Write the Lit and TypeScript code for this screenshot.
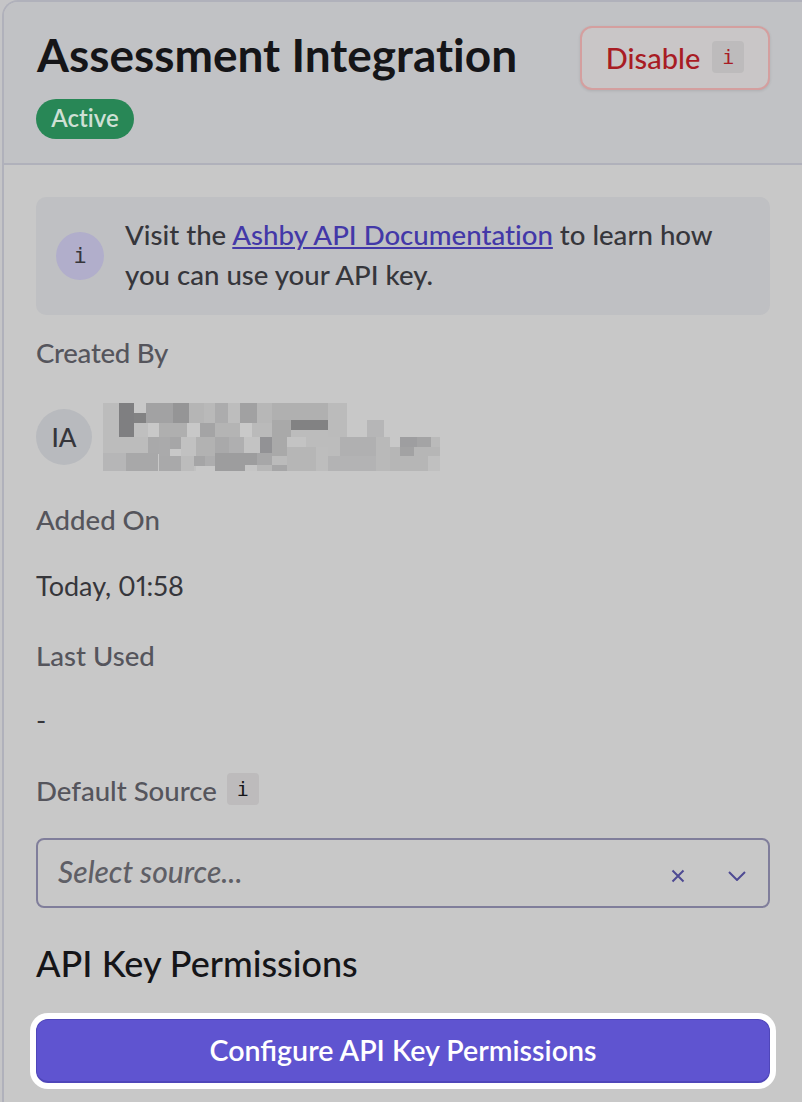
import { LitElement, css, html, svg } from 'lit';
import { customElement } from 'lit/decorators.js';

// pixelated name block: x, y, w, h, colour (relative to block origin)
const BLOCKS: [number, number, number, number, string][] = [
   [0, 0, 16, 34, '#bcbcbc'],
   [16, 0, 15, 34, '#7f7f81'],
   [31, 10, 14, 10, '#828283'],
   [31, 20, 14, 14, '#bfbfbf'],
   [43, 0, 27, 20, '#a2a2a3'],
   [70, 0, 16, 20, '#959596'],
   [86, 0, 15, 20, '#b5b5b5'],
   [101, 0, 11, 20, '#b9b9b9'],
   [112, 0, 13, 20, '#acacad'],
   [125, 0, 12, 20, '#bdbdbd'],
   [137, 0, 17, 20, '#a1a1a2'],
   [154, 0, 15, 20, '#b7b7b7'],
   [169, 0, 56, 17, '#b0b0b0'],
   [225, 0, 19, 34, '#bbbbbb'],
   [56, 20, 28, 14, '#afafaf'],
   [97, 20, 15, 14, '#a4a4a5'],
   [112, 20, 25, 14, '#b4b4b4'],
   [137, 20, 12, 14, '#c9c9c9'],
   [149, 20, 20, 14, '#bababa'],
   [169, 17, 19, 17, '#a9a9a9'],
   [188, 17, 37, 10, '#828283'],
   [188, 27, 37, 7, '#bcbcbc'],
   [264, 17, 17, 17, '#b6b6b7'],
   [0, 34, 45, 34, '#bcbcbc'],
   [45, 34, 11, 17, '#a9a9aa'],
   [56, 34, 11, 34, '#aaaaab'],
   [67, 34, 11, 12, '#a6a6a7'],
   [78, 34, 15, 34, '#c1c1c1'],
   [93, 34, 19, 19, '#b2b2b2'],
   [112, 34, 14, 19, '#a9a9aa'],
   [126, 34, 15, 19, '#afafb0'],
   [141, 34, 16, 19, '#c3c3c3'],
   [157, 34, 12, 19, '#929295'],
   [169, 34, 15, 19, '#a9a9a9'],
   [184, 34, 19, 10, '#c3c3c3'],
   [203, 34, 34, 19, '#bcbcbc'],
   [237, 34, 36, 19, '#b0b0b1'],
   [273, 34, 14, 34, '#b9b9b9'],
   [297, 34, 17, 10, '#9e9ea0'],
   [297, 44, 14, 9, '#a2a2a3'],
   [314, 34, 14, 10, '#a4a4a5'],
   [328, 34, 14, 19, '#bababa'],
   [91, 53, 11, 10, '#a5a5a6'],
   [102, 53, 11, 10, '#adadae'],
   [112, 50, 42, 18, '#9d9d9e'],
   [154, 50, 15, 12, '#a7a7a8'],
   [169, 53, 15, 15, '#bbbbbb'],
   [184, 44, 29, 24, '#b6b6b6'],
   [23, 50, 32, 18, '#a8a8a9'],
   [0, 50, 23, 18, '#b6b6b7'],
   [56, 53, 22, 15, '#a9a9aa'],
   [78, 53, 13, 15, '#bcbcbc'],
   [112, 62, 30, 6, '#9d9d9e'],
   [142, 62, 12, 6, '#c5c5c5'],
   [154, 62, 15, 6, '#b7b7b7'],
   [169, 62, 15, 6, '#a6a6a7'],
   [213, 44, 12, 24, '#bdbdbd'],
   [225, 53, 48, 15, '#b3b3b4'],
   [287, 44, 50, 24, '#b6b6b6'],
   [297, 44, 14, 9, '#a2a2a3'],
   [325, 53, 12, 15, '#c0c0c0'],
];

@customElement('app-root')
export class AppRoot extends LitElement {
   static styles = css`
      :host {
         display: block;
         height: 1102px;
         overflow: hidden;
         background: #c5c5c7;
         font-family: 'Lato', sans-serif;
         font-variant-ligatures: none;
         font-variant-numeric: proportional-nums;
         font-size: 27.6px;
         font-weight: 500;
         color: #36363b;
      }

      .panel {
         height: 1102px;
         box-sizing: border-box;
         margin-left: 2px;
         border-top: 2px solid #b0b1bb;
         border-left: 2px solid #b0b1bb;
         border-top-left-radius: 16px;
         background: #c8c8c8;
         overflow: hidden;
      }

      .head {
         height: 163px;
         box-sizing: border-box;
         padding: 24px 32px 0 33px;
         background: #c1c2c5;
         border-bottom: 2px solid #b0b1bb;
      }

      .head-row {
         display: flex;
         justify-content: space-between;
         height: 64px;
      }

      h1 {
         margin: 0;
         font-size: 46px;
         line-height: 58px;
         font-weight: 700;
         color: #151518;
      }

      .disable {
         display: flex;
         align-items: center;
         justify-content: center;
         gap: 12px;
         width: 190px;
         box-sizing: border-box;
         padding-bottom: 2px;
         border: 2px solid #d49f9f;
         border-radius: 12px;
         background: #c9c6c7;
         box-shadow: 0 1px 3px rgba(0, 0, 0, 0.1);
         color: #a81c24;
         font-size: 29px;
      }

      .chip {
         display: inline-flex;
         align-items: center;
         justify-content: center;
         width: 32px;
         height: 32px;
         border-radius: 4px;
         background: #bdbbbc;
         font-family: 'DejaVu Sans Mono', monospace;
         font-size: 20px;
      }

      .badge {
         width: 98px;
         height: 40px;
         margin: 9px 0 0 -1px;
         border-radius: 20px;
         background: #288756;
         color: #cfe0d5;
         font-size: 24px;
         font-weight: 600;
         line-height: 38px;
         text-align: center;
      }

      .body {
         padding: 32px 32px 0 32px;
      }

      .info {
         display: flex;
         align-items: center;
         gap: 21px;
         height: 118px;
         box-sizing: border-box;
         padding: 0 20px 2px;
         border-radius: 10px;
         background: #bfc0c3;
         line-height: 40px;
      }

      .info-icon {
         flex: none;
         display: flex;
         align-items: center;
         justify-content: center;
         width: 48px;
         height: 48px;
         margin-top: 2px;
         border-radius: 50%;
         background: #b1aecb;
         font-family: 'DejaVu Sans Mono', monospace;
         font-size: 22px;
      }

      a {
         color: #4338a8;
         font-weight: 500;
      }

      .label {
         line-height: 40px;
         color: #55555c;
      }

      .value {
         line-height: 40px;
         font-weight: 400;
      }

      .created { margin-top: 18px; letter-spacing: -0.3px; }
      .added { margin-top: 29px; }
      .today { margin-top: 26px; font-size: 27px; }
      .used { margin-top: 30px; }
      .dash { margin-top: 24px; }
      .source { margin-top: 31px; display: flex; align-items: center; gap: 10px; }
      .source .chip { color: #151518; margin-top: -4px; }

      .person {
         display: flex;
         align-items: center;
         gap: 11px;
         height: 68px;
         margin-top: 30px;
      }

      .avatar {
         flex: none;
         display: flex;
         align-items: center;
         justify-content: center;
         width: 56px;
         height: 56px;
         border-radius: 50%;
         background: #b8babe;
         font-size: 26px;
      }

      .select {
         display: flex;
         align-items: center;
         height: 70px;
         box-sizing: border-box;
         margin-top: 27px;
         padding: 0 22px 0 20px;
         border: 2px solid #807e9b;
         border-radius: 8px;
      }

      .placeholder {
         flex: 1;
         margin-top: -4px;
         font-size: 30px;
         font-style: italic;
         color: #5f5f66;
      }

      .select svg {
         display: block;
         margin-top: 6px;
         fill: none;
         stroke: #4e4a93;
         stroke-width: 2;
      }

      .select .clear { margin-right: 43px; }

      h2 {
         margin: 33px 0 0;
         font-size: 36px;
         line-height: 44px;
         font-weight: 500;
         color: #151518;
      }

      .configure {
         display: block;
         width: 100%;
         height: 64px;
         margin-top: 34px;
         padding: 0 0 2px;
         border: 1px solid #4f46ba;
         border-bottom-width: 2px;
         border-radius: 12px;
         background: #5f54d0;
         box-shadow: 0 0 0 6px #fff;
         color: #fff;
         font: 600 28.6px 'Lato', sans-serif;
      }
   `;

   render() {
      return html`<div class="panel">
         <div class="head">
            <div class="head-row">
               <h1>Assessment Integration</h1>
               <div class="disable">Disable <span class="chip">i</span></div>
            </div>
            <div class="badge">Active</div>
         </div>
         <div class="body">
            <div class="info">
               <span class="info-icon">i</span>
               <div>Visit the <a href="#">Ashby API Documentation</a> to learn how you can use your API key.</div>
            </div>
            <div class="label created">Created By</div>
            <div class="person">
               <span class="avatar">IA</span>
               <svg width="337" height="68" viewBox="0 0 337 68">
                  ${BLOCKS.map(([x, y, w, h, c]) => svg`<rect x=${x} y=${y} width=${w} height=${h} fill=${c}></rect>`)}
               </svg>
            </div>
            <div class="label added">Added On</div>
            <div class="value today">Today, 01:58</div>
            <div class="label used">Last Used</div>
            <div class="value dash">-</div>
            <div class="label source">Default Source <span class="chip">i</span></div>
            <div class="select">
               <span class="placeholder">Select source...</span>
               <svg class="clear" width="14" height="14" viewBox="0 0 14 14"><path d="M1.5 1.5l11 11M12.5 1.5l-11 11"></path></svg>
               <svg width="18" height="10" viewBox="0 0 18 10"><path d="M1 1l8 8 8-8"></path></svg>
            </div>
            <h2>API Key Permissions</h2>
            <button class="configure">Configure API Key Permissions</button>
         </div>
      </div>`;
   }
}
